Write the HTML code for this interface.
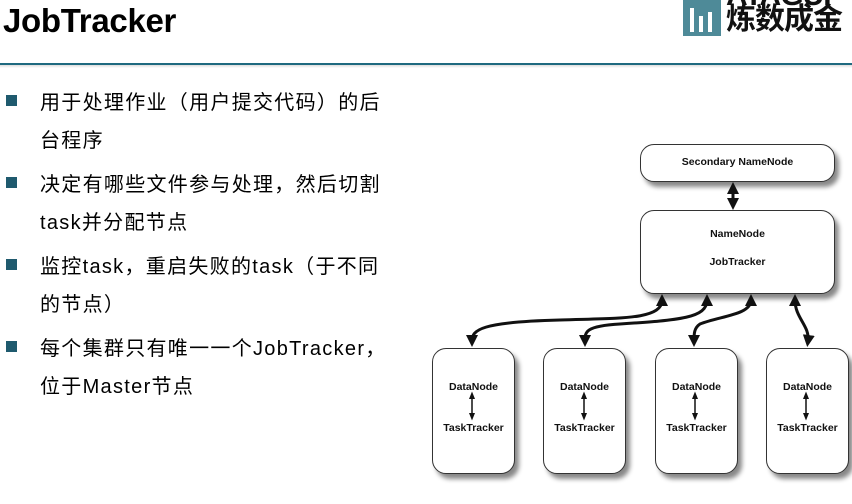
<!DOCTYPE html>
<html><head><meta charset="utf-8"><style>
body{margin:0;width:852px;height:504px;background:#fff;position:relative;overflow:hidden;font-family:"Liberation Sans","Noto Sans CJK SC",sans-serif}
.t{position:absolute;left:3px;top:2px;font-size:33px;font-weight:bold;color:#000;letter-spacing:-0.3px}
.hl{position:absolute;left:0;top:63px;width:852px;height:2px;background:#1f6a80}
.hs{position:absolute;left:0;top:65px;width:852px;height:3px;background:linear-gradient(#ddd,#fff)}
.b{position:absolute;left:6px;width:11px;height:11px;background:#1f5a6e}
.tx{position:absolute;left:40px;font-size:20px;color:#000;line-height:38px;white-space:nowrap;letter-spacing:1.3px}
.box{position:absolute;background:#fff;border:1.5px solid #333;border-radius:14px;box-shadow:4px 5px 5px #888}
.lb{position:absolute;font-size:10.5px;font-weight:bold;color:#111;text-align:center;font-family:"Liberation Sans",sans-serif}
</style></head><body>
<div class="t">JobTracker</div>
<div style="position:absolute;left:683px;top:0;width:38px;height:36px;background:#4e8a98"></div>
<div style="position:absolute;left:690px;top:8px;width:4px;height:24px;background:#fff"></div>
<div style="position:absolute;left:699px;top:16px;width:4px;height:16px;background:#fff"></div>
<div style="position:absolute;left:708px;top:12px;width:4px;height:20px;background:#fff"></div>
<div style="position:absolute;left:726px;top:-16px;font-size:30px;font-weight:bold;color:#111;letter-spacing:-1px;line-height:24px;white-space:nowrap">ATAGUI<br>炼数成金</div>
<div class="hl"></div><div class="hs"></div>

<div class="b" style="top:95px"></div><div class="tx" style="top:84px">用于处理作业（用户提交代码）的后<br>台程序</div>
<div class="b" style="top:177px"></div><div class="tx" style="top:166px">决定有哪些文件参与处理，然后切割<br>task并分配节点</div>
<div class="b" style="top:259px"></div><div class="tx" style="top:248px">监控task，重启失败的task（于不同<br>的节点）</div>
<div class="b" style="top:341px"></div><div class="tx" style="top:330px">每个集群只有唯一一个JobTracker，<br>位于Master节点</div>

<div class="box" style="left:640px;top:144px;width:193px;height:36px"></div>
<div class="lb" style="left:640px;top:156px;width:195px">Secondary NameNode</div>
<div class="box" style="left:640px;top:210px;width:193px;height:82px"></div>
<div class="lb" style="left:640px;top:228px;width:195px">NameNode</div>
<div class="lb" style="left:640px;top:256px;width:195px">JobTracker</div>

<div class="box" style="left:432px;top:348px;width:81px;height:124px"></div>
<div class="box" style="left:543px;top:348px;width:81px;height:124px"></div>
<div class="box" style="left:655px;top:348px;width:81px;height:124px"></div>
<div class="box" style="left:766px;top:348px;width:81px;height:124px"></div>
<div class="lb" style="left:432px;top:381px;width:83px">DataNode</div><div class="lb" style="left:432px;top:422px;width:83px">TaskTracker</div>
<div class="lb" style="left:543px;top:381px;width:83px">DataNode</div><div class="lb" style="left:543px;top:422px;width:83px">TaskTracker</div>
<div class="lb" style="left:655px;top:381px;width:83px">DataNode</div><div class="lb" style="left:655px;top:422px;width:83px">TaskTracker</div>
<div class="lb" style="left:766px;top:381px;width:83px">DataNode</div><div class="lb" style="left:766px;top:422px;width:83px">TaskTracker</div>

<svg style="position:absolute;left:0;top:0" width="852" height="504">
<defs><marker id="a" markerWidth="4" markerHeight="4" refX="2" refY="2" orient="auto-start-reverse" markerUnits="strokeWidth"><path d="M0,0L4,2L0,4z" fill="#111"/></marker>
<marker id="s" markerWidth="5" markerHeight="5" refX="2" refY="2.5" orient="auto-start-reverse" markerUnits="strokeWidth"><path d="M0,0.5L5,2.5L0,4.5z" fill="#111"/></marker></defs>
<g stroke="#111" stroke-width="3" fill="none" marker-start="url(#a)" marker-end="url(#a)">
<path d="M733,188L733,204"/>
<path d="M662,300C662,320 620,318 560,320C480,322 472,330 472,341"/>
<path d="M707,300C707,318 680,320 620,324C585,326 585,332 585,341"/>
<path d="M751,300C751,315 720,316 700,324C694,328 694,334 694,341"/>
<path d="M795,300C795,318 810,326 808,341"/>
</g>
<g stroke="#111" stroke-width="1.5" fill="none" marker-start="url(#s)" marker-end="url(#s)">
<path d="M472,396L472,416"/><path d="M584,396L584,416"/><path d="M695,396L695,416"/><path d="M806,396L806,416"/>
</g>
</svg>
</body></html>
